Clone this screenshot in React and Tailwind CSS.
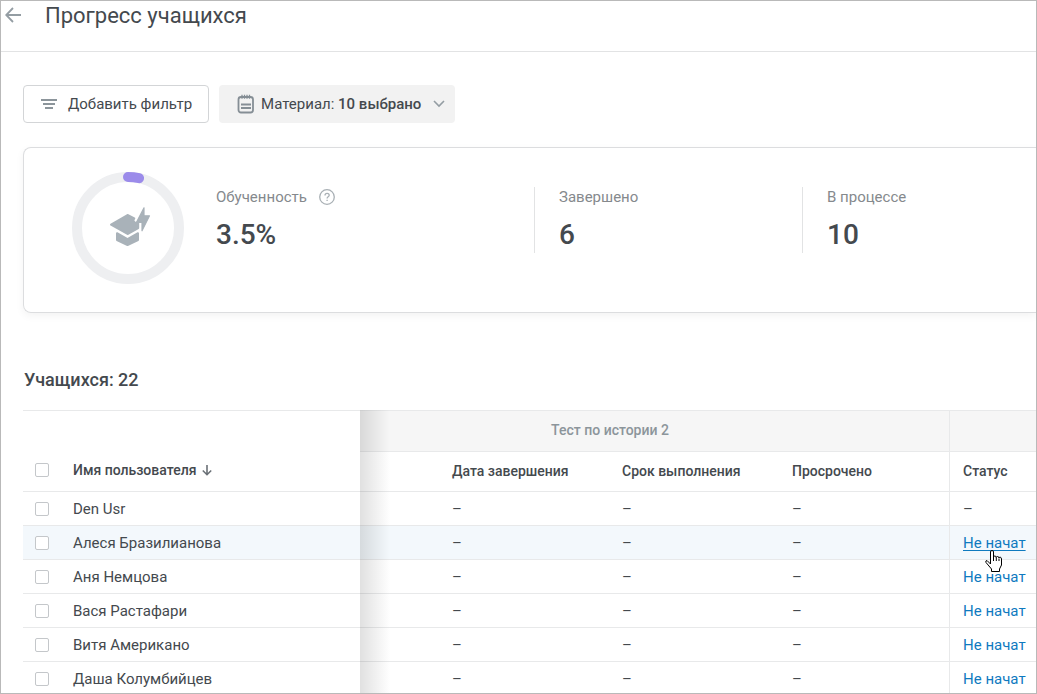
import React, { useState } from "react";

const stats = [
    { label: "Завершено", value: "6" },
    { label: "В процессе", value: "10" },
];

const initialUsers = [
    { id: 1, name: "Den Usr", status: null },
    { id: 2, name: "Алеся Бразилианова", status: "Не начат", active: true },
    { id: 3, name: "Аня Немцова", status: "Не начат" },
    { id: 4, name: "Вася Растафари", status: "Не начат" },
    { id: 5, name: "Витя Американо", status: "Не начат" },
    { id: 6, name: "Даша Колумбийцев", status: "Не начат" },
];

const checkboxClass =
    "block size-3.5 appearance-none rounded-xs border border-[#c4c7ca] bg-white checked:border-[#1279b8] checked:bg-[#1279b8]";

const BackIcon = () => (
    <svg width="16" height="16" viewBox="0 0 16 16" fill="none" stroke="#949da3" strokeWidth="1.8">
        <path d="M16 8H1.5M8 1 1.2 8 8 15" />
    </svg>
);

const FilterIcon = () => (
    <svg width="16" height="12" viewBox="0 0 16 12" fill="none" stroke="#8c959b" strokeWidth="1.8">
        <path d="M0 2h16M2 6h12M4 10h8" />
    </svg>
);

const NotepadIcon = () => (
    <svg width="18" height="20" viewBox="0 0 18 20" fill="none" stroke="#858e95" strokeWidth="1.8">
        <rect x="1.5" y="3" width="14.5" height="15.5" rx="2.5" />
        <path d="M5 .8v4M7.5 .8v4M10 .8v4M12.500 .8v4" strokeWidth="1.3" />
        <path d="M4 10.500h10M4 14h10" strokeWidth="1.9" />
    </svg>
);

const ChevronIcon = () => (
    <svg width="12" height="8" viewBox="0 0 12 8" fill="none" stroke="#949da3" strokeWidth="1.6">
        <path d="M1 1l5 5 5-5" />
    </svg>
);

const HelpIcon = () => (
    <svg width="16" height="16" viewBox="0 0 16 16" fill="none" stroke="#a9b0b5" strokeWidth="1.3">
        <circle cx="8" cy="8" r="7.3" />
        <path d="M6 6.500c0-2.800 4.200-2.600 4.200-.2 0 1.500-2.100 1.600-2.100 3.200M8.100 10.700v1.300" />
    </svg>
);

const SortIcon = () => (
    <svg width="10" height="11" viewBox="0 0 10 11" fill="none" stroke="#6b7177" strokeWidth="1.6">
        <path d="M5 0v9.500M.8 5.500 5 9.700l4.200-4.200" />
    </svg>
);

// Ring with the learning rate and a graduation cap inside
const ProgressRing = ({ percent }) => (
    <svg width="112" height="112" viewBox="0 0 112 112" fill="none" className="shrink-0">
        <circle cx="56" cy="56" r="51" stroke="#eeeff1" strokeWidth="10" />
        <circle
            cx="56"
            cy="56"
            r="51"
            stroke="#9b8bea"
            strokeWidth="10"
            strokeLinecap="round"
            pathLength="100"
            strokeDasharray={`${percent} 100`}
            transform="rotate(-90 56 56)"
        />
        <g fill="#a9b2b9" stroke="#a9b2b9" strokeLinejoin="round">
            <path d="M39 52.700 55.500 43l6.800 3.300q-2 2.700.7 4.200l3.200.6v5L55.500 62z" strokeWidth="2" />
            <path d="M45 61.200l10.500 6 10.500-6v6.800l-10.500 5L45 68z" strokeWidth="2" />
            <path d="M72 35.800v8h5.500L70 58.800v-8.500h-5.500z" strokeWidth="1.200" />
        </g>
    </svg>
);

const HandCursor = () => (
    <svg width="18" height="22" viewBox="0 0 18 22" className="pointer-events-none absolute left-[35px] top-[24px]">
        <path
            d="M5.500 14V2q0-1.500 1.500-1.500T8.500 2v5q0-1 1.300-1t1.400 1.500q.2-1 1.400-1T14 8q.1-.8 1.200-.8T16.500 9v6l-2 4v2.500h-8V19L1 12.500q-.8-2 1-2z"
            fill="#fff"
            stroke="#000"
        />
        <path d="M8.500 7v4M11.300 7.500V11M14 8.500V11" stroke="#000" />
    </svg>
);

const App = () => {
    const [selected, setSelected] = useState([]);
    const allSelected = selected.length === initialUsers.length;

    const toggleAll = () => setSelected(allSelected ? [] : initialUsers.map((u) => u.id));

    const toggleUser = (id) =>
        setSelected((prev) => (prev.includes(id) ? prev.filter((s) => s !== id) : [...prev, id]));

    return (
        <div className="h-screen overflow-hidden border border-[#b9b9b9] bg-white font-[Roboto,sans-serif] text-[15px] leading-5 text-[#44494e]">
            <header className="flex items-start gap-6 border-b border-[#e2e3e4] pb-5 pl-1">
                <button type="button" aria-label="Назад" className="mt-1.5 cursor-pointer">
                    <BackIcon />
                </button>
                <h1 className="text-[22px] leading-[30px]">Прогресс учащихся</h1>
            </header>

            <main className="pl-[22px] pt-[33px]">
                <div className="flex gap-2.5">
                    <button
                        type="button"
                        className="flex h-[38px] items-center gap-[11px] rounded border border-[#d3d5d7] pl-[17px] pr-4"
                    >
                        <FilterIcon />
                        Добавить фильтр
                    </button>
                    <button type="button" className="flex h-[38px] items-center rounded bg-[#f2f2f2] pl-[18px] pr-2.5">
                        <NotepadIcon />
                        <span className="ml-1.5 mr-3">
                            Материал: <b className="font-medium">10 выбрано</b>
                        </span>
                        <ChevronIcon />
                    </button>
                </div>

                <section className="mt-6 flex rounded-l-lg border border-r-0 border-[#dcdddf] pb-7 pl-12 pt-6 shadow-[0_3px_8px_rgba(0,0,0,0.05)]">
                    <ProgressRing percent={3.5} />
                    <dl className="ml-8 flex flex-1 pt-[15px]">
                        <div className="h-[66px] w-[318px] shrink-0">
                            <dt className="flex items-center gap-3 text-[#85898d]">
                                Обученность <HelpIcon />
                            </dt>
                            <dd className="mt-2.5 text-[28px] font-medium leading-9">3.5%</dd>
                        </div>
                        {stats.map((s) => (
                            <div key={s.label} className="h-[66px] w-[268px] shrink-0 border-l border-[#e2e3e4] pl-6">
                                <dt className="text-[#85898d]">{s.label}</dt>
                                <dd className="mt-2.5 text-[28px] font-medium leading-9">{s.value}</dd>
                            </div>
                        ))}
                    </dl>
                </section>

                <h2 className="mt-[55px] pl-px text-lg font-medium leading-6">Учащихся: 22</h2>

                <div className="relative mt-[18px]">
                    <table className="w-full table-fixed border-separate border-spacing-0 text-left">
                        <colgroup>
                            <col className="w-[50px]" />
                            <col className="w-[287px]" />
                            <col className="w-[79px]" />
                            <col className="w-[170px]" />
                            <col className="w-[170px]" />
                            <col className="w-[171px]" />
                            <col />
                        </colgroup>
                        <thead className="text-sm font-medium">
                            <tr className="h-[42px]">
                                <th rowSpan={2} className="border-y border-[#e8e9ea] pb-3.5 pl-3 align-bottom">
                                    <input
                                        type="checkbox"
                                        aria-label="Выбрать всех"
                                        checked={allSelected}
                                        onChange={toggleAll}
                                        className={checkboxClass}
                                    />
                                </th>
                                <th rowSpan={2} className="border-y border-[#e8e9ea] pb-[11px] align-bottom font-medium">
                                    <button type="button" className="flex items-center gap-1.5">
                                        Имя пользователя <SortIcon />
                                    </button>
                                </th>
                                <th
                                    colSpan={4}
                                    className="border-y border-r border-[#e8e9ea] bg-[#f6f6f6] pb-0.5 pr-[89px] text-center font-medium text-[#8c959b]"
                                >
                                    Тест по истории 2
                                </th>
                                <th className="border-y border-[#e8e9ea] bg-[#f6f6f6]" />
                            </tr>
                            <tr className="h-10">
                                <th className="border-b border-[#e8e9ea]" />
                                <th className="border-b border-[#e8e9ea] pb-0.5 pl-[13px] font-medium">Дата завершения</th>
                                <th className="border-b border-[#e8e9ea] pb-0.5 pl-[13px] font-medium">Срок выполнения</th>
                                <th className="border-b border-r border-[#e8e9ea] pb-0.5 pl-[13px] font-medium">Просрочено</th>
                                <th className="border-b border-[#e8e9ea] pb-0.5 pl-[13px] font-medium">Статус</th>
                            </tr>
                        </thead>
                        <tbody>
                            {initialUsers.map((user) => (
                                <tr key={user.id} className={user.active ? "h-[34px] bg-[#f3f8fc]" : "h-[34px]"}>
                                    <td className="border-b border-[#e8e9ea] pl-3">
                                        <input
                                            type="checkbox"
                                            aria-label={user.name}
                                            checked={selected.includes(user.id)}
                                            onChange={() => toggleUser(user.id)}
                                            className={checkboxClass}
                                        />
                                    </td>
                                    <td className="border-b border-[#e8e9ea]">{user.name}</td>
                                    <td className="border-b border-[#e8e9ea]" />
                                    <td className="border-b border-[#e8e9ea] pl-[13px]">–</td>
                                    <td className="border-b border-[#e8e9ea] pl-[13px]">–</td>
                                    <td className="border-b border-r border-[#e8e9ea] pl-[13px]">–</td>
                                    <td className="relative border-b border-[#e8e9ea] pl-[13px]">
                                        {user.status ? (
                                            <a
                                                href="#status"
                                                className={
                                                    user.active
                                                        ? "text-[#0f7abf] underline underline-offset-2"
                                                        : "text-[#0f7abf]"
                                                }
                                            >
                                                {user.status}
                                            </a>
                                        ) : (
                                            "–"
                                        )}
                                        {user.active && <HandCursor />}
                                    </td>
                                </tr>
                            ))}
                        </tbody>
                    </table>
                    {/* shadow of the pinned columns */}
                    <div className="pointer-events-none absolute inset-y-0 left-[337px] w-[30px] bg-linear-to-r from-black/12 to-transparent" />
                </div>
            </main>
        </div>
    );
};

export default App;
